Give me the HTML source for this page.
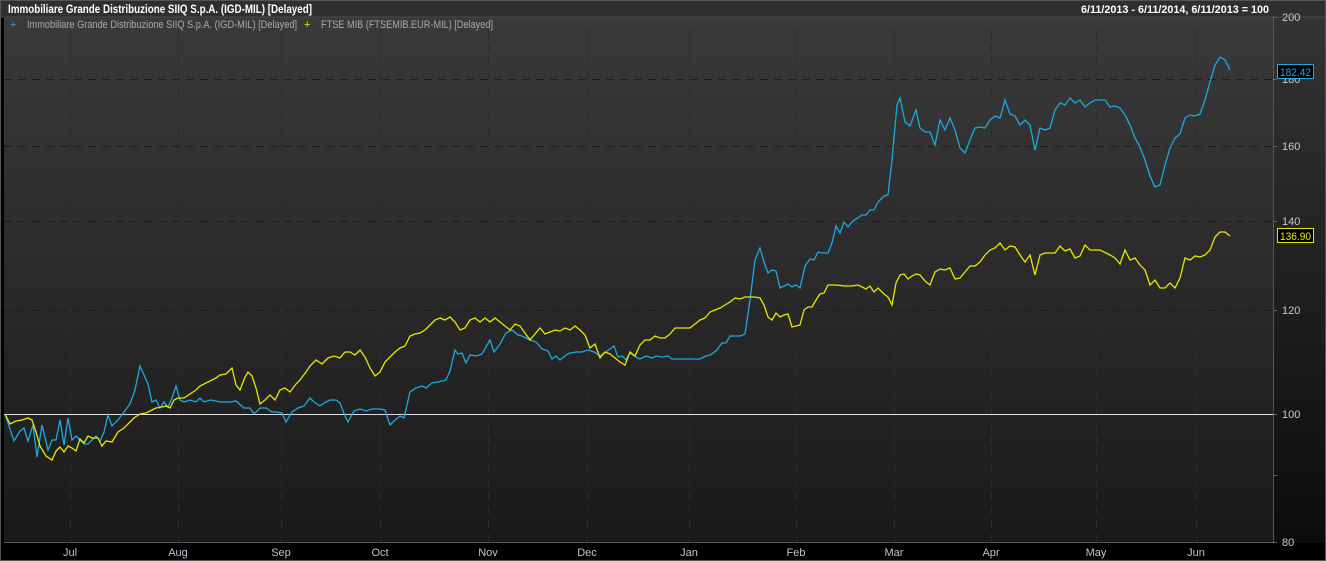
<!DOCTYPE html><html><head><style>
body{margin:0;background:#000;width:1326px;height:561px;overflow:hidden;font-family:"Liberation Sans",sans-serif}
</style></head><body>
<svg width="1326" height="561" xmlns="http://www.w3.org/2000/svg" style="position:absolute;left:0;top:0">
<defs>
<linearGradient id="pg" x1="0" y1="0" x2="0" y2="1"><stop offset="0" stop-color="#3a3a3a"/><stop offset="1" stop-color="#1a1a1a"/></linearGradient>
<linearGradient id="rg" x1="0" y1="0" x2="0" y2="1"><stop offset="0" stop-color="#353535"/><stop offset="1" stop-color="#0c0c0c"/></linearGradient>
</defs>
<rect x="0" y="0" width="1326" height="561" fill="#000"/>
<rect x="1273" y="0" width="53" height="543" fill="url(#rg)"/>
<rect x="4" y="17" width="1269" height="526" fill="url(#pg)"/>
<rect x="0" y="0" width="1326" height="17" fill="#2f2f2f"/>
<line x1="0" y1="17" x2="1326" y2="17" stroke="#4a4a4a"/>
<rect x="0.5" y="0.5" width="1325" height="560" fill="none" stroke="#555"/>
<g stroke="#1c1c1c" stroke-dasharray="8,6" stroke-width="1">
<line x1="4" y1="79.5" x2="1273" y2="79.5"/><line x1="4" y1="146.5" x2="1273" y2="146.5"/><line x1="4" y1="221.5" x2="1273" y2="221.5"/><line x1="4" y1="310.5" x2="1273" y2="310.5"/>
<g stroke="#2c2c2c">
<line x1="70.5" y1="30" x2="70.5" y2="542"/><line x1="178.5" y1="30" x2="178.5" y2="542"/><line x1="281.5" y1="30" x2="281.5" y2="542"/><line x1="380.5" y1="30" x2="380.5" y2="542"/><line x1="488.5" y1="30" x2="488.5" y2="542"/><line x1="587.5" y1="30" x2="587.5" y2="542"/><line x1="689.5" y1="30" x2="689.5" y2="542"/><line x1="796.5" y1="30" x2="796.5" y2="542"/><line x1="894.5" y1="30" x2="894.5" y2="542"/><line x1="991.5" y1="30" x2="991.5" y2="542"/><line x1="1096.5" y1="30" x2="1096.5" y2="542"/><line x1="1196.5" y1="30" x2="1196.5" y2="542"/>
</g></g>
<line x1="4" y1="542.5" x2="1273" y2="542.5" stroke="#555"/>
<line x1="1273.5" y1="17" x2="1273.5" y2="543" stroke="#555"/>
<g stroke="#666"><line x1="1273" y1="17.5" x2="1277" y2="17.5"/><line x1="1273" y1="79.5" x2="1277" y2="79.5"/><line x1="1273" y1="146.5" x2="1277" y2="146.5"/><line x1="1273" y1="221.5" x2="1277" y2="221.5"/><line x1="1273" y1="310.5" x2="1277" y2="310.5"/><line x1="1273" y1="414.5" x2="1277" y2="414.5"/><line x1="1273" y1="475.5" x2="1277" y2="475.5"/><line x1="1273" y1="542.5" x2="1277" y2="542.5"/></g>
<line x1="4" y1="414.5" x2="1273" y2="414.5" stroke="#ddd" stroke-width="1"/>
<polyline fill="none" stroke="#1ea9e1" stroke-width="1.3" points="5,414 14,441 20,431 24,428 28,441 33,425 37,457 42,425 48,450 52,440 56,440 60,420 64,445 68,418 72,440 76,436 80,440 84,444 88,444 92,440 96,436 100,441 104,432 108,415 112,426 118,420 124,412 130,404 135,390 140,366 144,375 148,384 152,402 156,400 160,408 164,402 168,407 172,398 176,386 180,400 184,402 190,400 196,402 200,398 204,402 210,400 216,401 220,402 230,402 236,401 244,408 250,408 254,414 260,408 266,408 272,412 276,412 282,413 286,422 292,412 298,408 304,406 310,398 314,402 320,406 324,403 330,400 336,400 340,403 345,416 348,422 354,411 360,409 366,411 372,409 380,409 385,410 390,425 395,420 400,416 404,418 410,392 416,388 422,386 426,388 432,383 438,382 446,380 450,371 455,350 458,354 462,353 466,363 470,355 476,356 482,354 486,347 490,340 494,352 500,344 506,333 512,330 518,335 522,336 530,340 536,342 542,349 548,351 552,359 556,356 560,360 566,355 570,353 576,352 582,352 588,350 594,352 600,356 604,353 610,349 614,346 618,357 622,356 626,360 630,353 634,356 640,359 646,356 652,358 656,356 662,357 668,356 672,359 680,359 690,359 700,359 706,356 710,355 716,351 722,343 726,343 730,336 736,336 740,336 745,334 750,300 755,260 760,248 764,262 768,273 772,270 776,271 780,288 784,286 788,284 792,287 796,285 800,288 805,266 810,259 814,260 818,252 822,253 828,253 832,243 836,226 840,233 844,222 848,227 852,222 856,219 862,215 866,215 870,210 874,210 878,202 884,196 888,195 892,160 897,105 900,98 905,122 910,126 916,110 920,128 925,132 930,132 935,145 940,120 945,130 950,118 955,130 960,148 965,153 970,140 975,128 980,127 985,128 990,120 995,116 1000,118 1005,100 1010,114 1015,116 1020,125 1025,120 1030,125 1035,150 1040,128 1045,130 1050,128 1055,110 1060,103 1065,105 1070,98 1075,103 1080,100 1085,107 1090,103 1095,100 1100,100 1105,100 1110,107 1115,106 1120,108 1125,115 1130,125 1135,138 1140,147 1145,160 1150,176 1155,187 1160,185 1165,165 1170,148 1175,138 1180,134 1185,118 1190,115 1195,116 1200,114 1205,100 1210,82 1215,65 1220,57 1225,60 1230,70"/>
<polyline fill="none" stroke="#e8e800" stroke-width="1.3" points="5,414 10,424 16,421 22,420 28,418 32,420 36,432 40,446 46,456 52,460 56,451 60,447 64,452 68,446 72,448 76,451 80,439 84,443 88,436 92,438 98,438 102,446 106,441 112,442 118,432 124,428 130,422 134,418 140,414 146,413 152,410 156,408 162,407 166,406 170,408 174,400 178,398 184,398 190,394 196,390 200,386 206,383 212,380 216,378 220,375 226,374 232,368 236,385 240,390 245,377 248,372 252,376 256,388 260,404 265,400 270,395 275,400 280,390 285,388 290,392 296,384 300,380 306,372 310,366 316,360 322,364 328,358 334,356 340,358 345,352 350,352 355,355 360,350 365,357 370,368 375,376 380,372 385,362 390,357 395,352 400,348 405,346 410,336 415,334 420,333 425,330 430,325 435,320 440,318 445,320 450,317 455,322 460,330 465,328 470,320 475,318 480,322 485,318 490,322 495,318 500,322 505,326 510,330 515,324 520,326 525,333 530,340 535,334 540,328 545,334 550,332 555,330 560,331 565,328 570,330 575,326 580,330 585,335 590,348 595,344 600,358 605,352 610,354 615,358 620,362 625,365 630,352 635,356 640,345 645,340 650,340 655,336 660,338 665,338 670,334 675,328 680,328 685,328 690,328 695,324 700,320 705,318 710,312 715,310 720,308 725,305 730,302 735,298 740,299 745,297 750,297 755,297 760,298 764,305 768,317 772,320 776,313 780,317 784,315 788,314 792,327 796,326 800,325 804,310 808,307 812,307 816,300 820,294 824,293 828,285 836,285 845,286 852,286 858,285 862,287 866,289 870,286 874,292 878,288 884,294 888,297 892,305 896,283 900,275 904,274 908,279 912,276 916,274 920,275 926,282 930,285 935,272 940,269 945,270 950,268 955,279 960,278 965,272 970,266 975,266 980,262 985,255 990,250 995,248 1000,243 1005,250 1010,246 1015,247 1020,255 1025,262 1030,255 1035,275 1040,255 1045,253 1055,253 1060,246 1065,251 1070,249 1075,258 1080,256 1085,245 1090,250 1100,250 1110,255 1115,258 1120,264 1125,250 1130,260 1135,258 1140,265 1145,270 1150,285 1155,280 1160,288 1165,288 1170,283 1175,288 1180,278 1185,258 1190,260 1195,256 1200,257 1205,255 1210,250 1215,237 1220,232 1225,232 1230,236"/>
<g font-family="Liberation Sans,sans-serif" font-size="11" fill="#c8c8c8">
<text x="1282" y="21">200</text><text x="1282" y="83">180</text><text x="1282" y="150">160</text><text x="1282" y="225">140</text><text x="1282" y="314">120</text><text x="1282" y="418">100</text><text x="1282" y="546">80</text>
<g text-anchor="middle" fill="#bcc4d0"><text x="70" y="556">Jul</text><text x="178" y="556">Aug</text><text x="281" y="556">Sep</text><text x="380" y="556">Oct</text><text x="488" y="556">Nov</text><text x="587" y="556">Dec</text><text x="689" y="556">Jan</text><text x="796" y="556">Feb</text><text x="894" y="556">Mar</text><text x="991" y="556">Apr</text><text x="1096" y="556">May</text><text x="1196" y="556">Jun</text></g>
</g>
<rect x="1277.5" y="64.5" width="36" height="14" fill="#000" stroke="#1ea9e1"/>
<text x="1280" y="76" font-family="Liberation Sans,sans-serif" font-size="11" fill="#1ea9e1" textLength="31" lengthAdjust="spacingAndGlyphs">182.42</text>
<rect x="1277.5" y="228.5" width="36" height="14" fill="#000" stroke="#e8e800"/>
<text x="1280" y="240" font-family="Liberation Sans,sans-serif" font-size="11" fill="#e8e800" textLength="31" lengthAdjust="spacingAndGlyphs">136.90</text>
<text x="8" y="13" font-family="Liberation Sans,sans-serif" font-size="12" font-weight="bold" fill="#fff" textLength="304" lengthAdjust="spacingAndGlyphs">Immobiliare Grande Distribuzione SIIQ S.p.A. (IGD-MIL) [Delayed]</text>
<text x="1081" y="13" font-family="Liberation Sans,sans-serif" font-size="11" font-weight="bold" fill="#fff" textLength="188" lengthAdjust="spacingAndGlyphs">6/11/2013 - 6/11/2014, 6/11/2013 = 100</text>
<g font-family="Liberation Sans,sans-serif" font-size="11">
<text x="10" y="28" fill="#1ea9e1">+</text><text x="27" y="28" fill="#aaa" textLength="270" lengthAdjust="spacingAndGlyphs">Immobiliare Grande Distribuzione SIIQ S.p.A. (IGD-MIL) [Delayed]</text>
<text x="304" y="28" fill="#e8e800">+</text><text x="321" y="28" fill="#aaa" textLength="172" lengthAdjust="spacingAndGlyphs">FTSE MIB (FTSEMIB.EUR-MIL) [Delayed]</text>
</g>
</svg>
</body></html>
